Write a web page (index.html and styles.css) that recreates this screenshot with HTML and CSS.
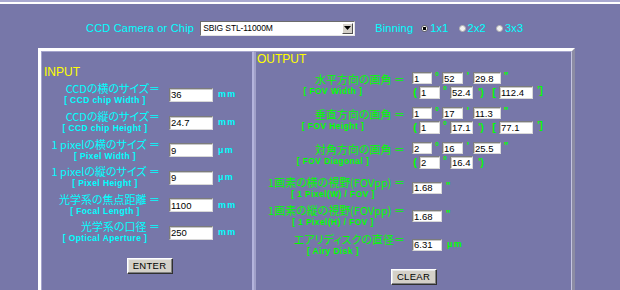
FILE: index.html
```html
<!DOCTYPE html>
<html lang="ja">
<head>
<meta charset="utf-8">
<title>CCD 視野計算</title>
<link rel="stylesheet" href="styles.css">
</head>
<body>
<div class="topline"></div>
<form class="page">
  <div class="header">
    <span class="hlabel">CCD Camera or Chip</span>
    <div class="select">
      <span class="sel-value">SBIG STL-11000M</span>
      <span class="sel-arrow"><svg width="7" height="4" viewBox="0 0 7 4"><path d="M0 0H7L3.5 4Z" fill="#000"/></svg></span>
    </div>
    <span class="hlabel binning">Binning</span>
    <span class="radio checked"></span><span class="hlabel opt">1x1</span>
    <span class="radio"></span><span class="hlabel opt">2x2</span>
    <span class="radio"></span><span class="hlabel opt">3x3</span>
  </div>

  <div class="panel">
    <div class="cell in-cell">
      <div class="title">INPUT</div>

      <div class="irow">
        <div class="lbl"><div class="main">CCDの横のサイズ＝</div><div class="sub">[ CCD chip Width ]</div></div>
        <input class="ibox" type="text" value="36"><span class="unit">mm</span>
      </div>
      <div class="irow">
        <div class="lbl"><div class="main">CCDの縦のサイズ＝</div><div class="sub">[ CCD chip Height ]</div></div>
        <input class="ibox" type="text" value="24.7"><span class="unit">mm</span>
      </div>
      <div class="irow">
        <div class="lbl"><div class="main">1 pixelの横のサイズ ＝</div><div class="sub">[ Pixel Width ]</div></div>
        <input class="ibox" type="text" value="9"><span class="unit">μm</span>
      </div>
      <div class="irow">
        <div class="lbl"><div class="main">1 pixelの縦のサイズ ＝</div><div class="sub">[ Pixel Height ]</div></div>
        <input class="ibox" type="text" value="9"><span class="unit">μm</span>
      </div>
      <div class="irow">
        <div class="lbl"><div class="main">光学系の焦点距離 ＝</div><div class="sub">[ Focal Length ]</div></div>
        <input class="ibox" type="text" value="1100"><span class="unit">mm</span>
      </div>
      <div class="irow">
        <div class="lbl"><div class="main">光学系の口径 ＝</div><div class="sub">[ Optical Aperture ]</div></div>
        <input class="ibox" type="text" value="250"><span class="unit">mm</span>
      </div>

      <div class="btnrow enter-row"><button type="button" class="btn">ENTER</button></div>
    </div>

    <div class="cell out-cell">
      <div class="title">OUTPUT</div>

      <div class="orow two">
        <div class="olbl"><div class="main">水平方向の画角 ＝</div><div class="sub">[ FOV Width ]</div></div>
        <div class="vals">
          <div class="vline">
            <input class="vb w20" type="text" value="1"><span class="sym s10">°</span><input class="vb w21" type="text" value="52"><span class="sym s10">'</span><input class="vb w28" type="text" value="29.8"><span class="sym s10">"</span>
          </div>
          <div class="vline l2">
            <span class="sym s8 par">(</span><input class="vb w21" type="text" value="1"><span class="sym s10">°</span><input class="vb w23" type="text" value="52.4"><span class="sym s16">')</span><span class="sym s10 par">[</span><input class="vb w34" type="text" value="112.4"><span class="sym s14">']</span>
          </div>
        </div>
      </div>

      <div class="orow two">
        <div class="olbl"><div class="main">垂直方向の画角 ＝</div><div class="sub">[ FOV Height ]</div></div>
        <div class="vals">
          <div class="vline">
            <input class="vb w20" type="text" value="1"><span class="sym s10">°</span><input class="vb w21" type="text" value="17"><span class="sym s10">'</span><input class="vb w28" type="text" value="11.3"><span class="sym s10">"</span>
          </div>
          <div class="vline l2">
            <span class="sym s8 par">(</span><input class="vb w21" type="text" value="1"><span class="sym s10">°</span><input class="vb w23" type="text" value="17.1"><span class="sym s16">')</span><span class="sym s10 par">[</span><input class="vb w34" type="text" value="77.1"><span class="sym s14">']</span>
          </div>
        </div>
      </div>

      <div class="orow two last-two">
        <div class="olbl"><div class="main">対角方向の画角 ＝</div><div class="sub">[ FOV Diagonal ]</div></div>
        <div class="vals">
          <div class="vline">
            <input class="vb w20" type="text" value="2"><span class="sym s10">°</span><input class="vb w21" type="text" value="16"><span class="sym s10">'</span><input class="vb w28" type="text" value="25.5"><span class="sym s10">"</span>
          </div>
          <div class="vline l2">
            <span class="sym s8 par">(</span><input class="vb w21" type="text" value="2"><span class="sym s10">°</span><input class="vb w23" type="text" value="16.4"><span class="sym s16">')</span>
          </div>
        </div>
      </div>

      <div class="orow one">
        <div class="olbl"><div class="main">1画素の横の視野(FOVpp) ＝</div><div class="sub">[ 1 Pixel(W) / FOV ]</div></div>
        <div class="vals"><div class="vline"><input class="vb w30" type="text" value="1.68"><span class="sym s12">"</span></div></div>
      </div>
      <div class="orow one">
        <div class="olbl"><div class="main">1画素の縦の視野(FOVpp) ＝</div><div class="sub">[ 1 Pixel(H) / FOV ]</div></div>
        <div class="vals"><div class="vline"><input class="vb w30" type="text" value="1.68"><span class="sym s12">"</span></div></div>
      </div>
      <div class="orow one">
        <div class="olbl"><div class="main">エアリディスクの直径＝</div><div class="sub">[ Airy Disk ]</div></div>
        <div class="vals"><div class="vline"><input class="vb w30" type="text" value="6.31"><span class="unit gunit">μm</span></div></div>
      </div>

      <div class="btnrow clear-row"><button type="button" class="btn">CLEAR</button></div>
    </div>
  </div>
</form>
</body>
</html>
```

FILE: styles.css
```css
* { box-sizing: border-box; }

html, body {
  margin: 0;
  padding: 0;
}

body {
  width: 620px;
  height: 290px;
  overflow: hidden;
  background: #7777a9;
  font-family: "Liberation Sans", "Noto Sans CJK JP", sans-serif;
}

.topline {
  height: 4px;
  background: #ffffff;
  border-top: 2px solid #a8a8d0;
}

/* ---------- header ---------- */
.header {
  display: flex;
  align-items: center;
  height: 16px;
  margin: 16px 0 12px;
  padding-left: 86px;
}

.hlabel {
  color: #00ffff;
  font-size: 11px;
  letter-spacing: 0.2px;
  line-height: 16px;
}

.select {
  display: flex;
  align-items: center;
  justify-content: space-between;
  width: 155px;
  height: 15px;
  margin-left: 6px;
  padding: 0 1px 0 2px;
  background: #ffffff;
  border: 1px solid;
  border-color: #6c6c6c #e4e4e4 #e4e4e4 #6c6c6c;
}

.sel-value {
  font-size: 8.5px;
  color: #000;
  letter-spacing: -0.1px;
}

.sel-arrow {
  display: flex;
  align-items: center;
  justify-content: center;
  width: 11px;
  height: 11px;
  background: #d4d0c8;
  border: 1px solid;
  border-color: #ffffff #505050 #505050 #ffffff;
}

.binning { margin-left: 20px; margin-right: 8px; }

.radio {
  width: 7px;
  height: 7px;
  border-radius: 50%;
  background: #f2f2f2;
  border: 1px solid #b0b0b0;
  margin-right: 2px;
}
.radio.checked {
  background: radial-gradient(circle, #000 0 1.4px, #ffffff 1.9px);
  border-color: #606060;
}
.opt { margin-right: 10px; }

/* ---------- panel ---------- */
.panel {
  display: flex;
  align-items: stretch;
  width: 537px;
  height: 242px;
  margin-left: 38px;
  border: 3px solid;
  border-color: #ffffff #8c8ca4 #8c8ca4 #ffffff;
  border-bottom: none;
}

.cell { display: flex; flex-direction: column; }

.in-cell {
  width: 213px;
  padding-top: 13.4px;
  border-left: 1px solid #a4a4cc;
  border-top: 1px solid #a4a4cc;
  border-right: 2px solid #b4b4dc;
}

.out-cell {
  flex: 1;
  padding-top: 0.4px;
  border-left: 2px solid #a0a0c8;
  border-top: 1px solid #a4a4cc;
  border-right: 1px solid #c4c4e0;
}

.title {
  color: #ffff00;
  font-size: 12px;
  line-height: 14px;
}
.in-cell .title { padding-left: 2px; margin-bottom: 3px; }
.out-cell .title { padding-left: 1px; margin-bottom: 6px; }

.main {
  color: #00ffff;
  font-family: "Noto Sans CJK JP", sans-serif;
  font-feature-settings: "palt";
  font-size: 11px;
  line-height: 13px;
  white-space: nowrap;
}

.sub {
  color: #00ffff;
  font-size: 8.5px;
  font-weight: bold;
  letter-spacing: 0.4px;
  line-height: 10px;
  white-space: nowrap;
  text-align: center;
}

/* input rows */
.irow {
  display: grid;
  grid-template-columns: 122px 44px auto;
  column-gap: 5px;
  align-items: start;
  height: 27.6px;
}
.irow .main { text-align: right; padding-right: 4px; }
.irow .sub { padding-left: 4px; }

.ibox {
  width: 44px;
  height: 14px;
  margin-top: 5.6px;
  padding: 0 0 0 1px;
  font-family: "Liberation Sans", sans-serif;
  font-size: 9.5px;
  color: #000;
  background: #ffffff;
  border: 1px solid;
  border-color: #7c7c7c #d8d8d8 #d8d8d8 #7c7c7c;
  box-shadow: inset 1px 1px 0 #c8c8c8;
  outline: none;
}

.unit {
  color: #00ffff;
  font-size: 9px;
  font-weight: bold;
  letter-spacing: 1.2px;
  margin-top: 7px;
}
.gunit { color: #00ff00; margin: 0 0 0 5px; }

.btnrow { display: flex; justify-content: center; }
.enter-row { margin-top: 10px; padding-left: 5px; }
.clear-row { margin-top: 7px; }

.btn {
  width: 46px;
  height: 16px;
  padding: 0;
  font-family: "Liberation Sans", sans-serif;
  font-size: 9.5px;
  letter-spacing: 0.3px;
  color: #000;
  background: #d4d0c8;
  border: 1px solid;
  border-color: #ffffff #303030 #303030 #ffffff;
  box-shadow: inset -1px -1px 0 #808080, inset 1px 1px 0 #e8e8e8;
}

/* output rows */
.orow {
  display: grid;
  grid-template-columns: 151px auto;
  column-gap: 5px;
}
.orow .main { color: #00ff00; text-align: right; padding-right: 2px; }
.orow .sub { color: #00ff00; padding-left: 3px; }

.orow.two { height: 35px; align-items: start; }
.orow.two .olbl { padding-top: 0.4px; }
.orow.two.last-two { height: 33.4px; }

.orow.one { height: 28.6px; align-items: start; }
.orow.one .vals { padding-top: 6px; }

.vals { display: flex; flex-direction: column; }
.vline { display: flex; align-items: flex-start; height: 12px; }
.vline.l2 { height: 13px; margin-top: 2px; margin-left: -1px; }

.vb {
  height: 12px;
  padding: 0 0 0 1px;
  font-family: "Liberation Sans", sans-serif;
  font-size: 9.5px;
  color: #000;
  background: #ffffff;
  border: 1px solid;
  border-color: #7c7c7c #d8d8d8 #d8d8d8 #7c7c7c;
  box-shadow: inset 1px 1px 0 #c8c8c8;
  outline: none;
}
.vline.l2 .vb { height: 13px; }
.w20 { width: 20px; }
.w21 { width: 21px; }
.w23 { width: 23px; }
.w28 { width: 28px; }
.w30 { width: 30px; }
.w34 { width: 34px; }

.sym {
  color: #00ff00;
  font-size: 10px;
  font-weight: bold;
  line-height: 10px;
  text-align: center;
}
.sym.par { line-height: 13px; font-size: 11px; }
.s8 { width: 8px; }
.s10 { width: 10px; }
.s12 { width: 12px; }
.s14 { width: 14px; }
.s16 { width: 16px; line-height: 13px; }
```
